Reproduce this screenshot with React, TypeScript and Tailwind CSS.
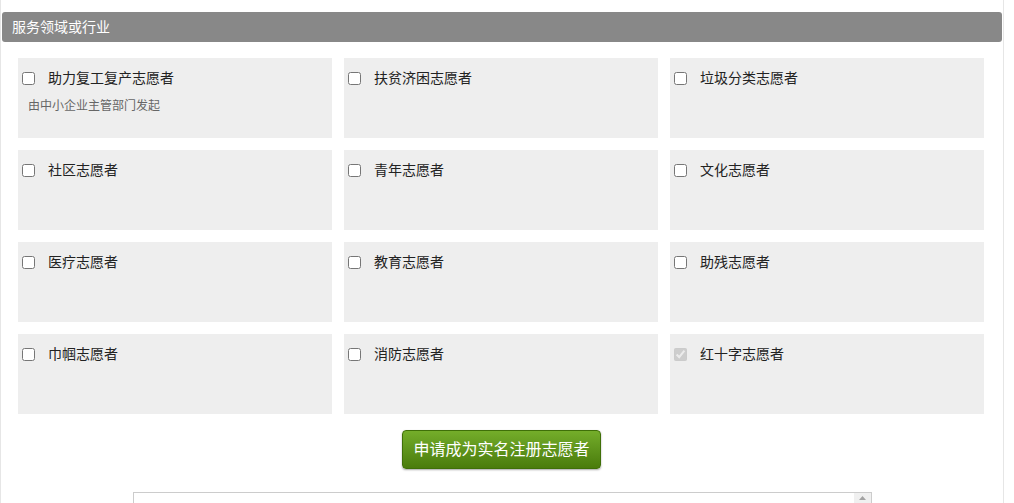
import React from 'react'

const ITEMS: { label: string; note?: string; checked?: boolean; disabled?: boolean }[] = [
  { label: '助力复工复产志愿者', note: '由中小企业主管部门发起' },
  { label: '扶贫济困志愿者' },
  { label: '垃圾分类志愿者' },
  { label: '社区志愿者' },
  { label: '青年志愿者' },
  { label: '文化志愿者' },
  { label: '医疗志愿者' },
  { label: '教育志愿者' },
  { label: '助残志愿者' },
  { label: '巾帼志愿者' },
  { label: '消防志愿者' },
  { label: '红十字志愿者', checked: true, disabled: true },
]

export default function App() {
  return (
    <div
      className="w-[1014px] h-[503px] overflow-hidden bg-white text-[#333]"
      style={{ fontFamily: '"Liberation Sans", "Noto Sans CJK SC", sans-serif' }}
    >
      <div className="w-[1004px] h-[503px] border-x border-[#e6e6e6] pt-[12px] px-[1px]">
        {/* Section header */}
        <div className="h-[30px] bg-[#888888] rounded-[3px] text-white text-[14px] leading-[30px] pl-[10px]">
          服务领域或行业
        </div>

        {/* Options grid */}
        <div className="grid grid-cols-[314px_314px_314px] gap-[12px] pl-[16px] mt-[16px]">
          {ITEMS.map(item => (
            <label key={item.label} className="h-[80px] bg-[#eeeeee] pt-[9px] block">
              <div className="flex items-center h-[22px]">
                <input
                  type="checkbox"
                  defaultChecked={item.checked}
                  disabled={item.disabled}
                  className="w-[13px] h-[13px] ml-[4px] mr-0 my-0"
                />
                <span className="ml-[13px] text-[14px] text-[#222]">{item.label}</span>
              </div>
              {item.note && (
                <div className="ml-[10px] mt-[8px] text-[12px] text-[#666]">{item.note}</div>
              )}
            </label>
          ))}
        </div>

        {/* Submit */}
        <div className="flex justify-center mt-[16px] pr-[1px]">
          <button className="w-[199px] h-[39px] rounded-[4px] border border-[#3f6f08] bg-gradient-to-b from-[#74ad2a] to-[#4a7c0b] text-white text-[16px] shadow-[0_1px_2px_rgba(0,0,0,0.35)]">
            申请成为实名注册志愿者
          </button>
        </div>

        {/* Textarea-like box */}
        <div className="ml-[131px] mt-[23px] w-[739px] h-[40px] border border-[#cccccc] flex justify-end">
          <div className="w-[17px] h-full bg-[#f0f0f0] flex justify-center pt-[3px]">
            <svg width="7" height="4" viewBox="0 0 7 4">
              <path d="M3.5 0 L7 4 L0 4 Z" fill="#a3a3a3" />
            </svg>
          </div>
        </div>
      </div>
    </div>
  )
}
